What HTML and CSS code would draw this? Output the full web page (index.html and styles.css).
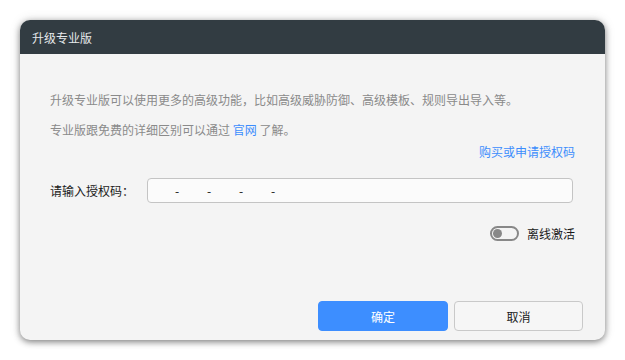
FILE: index.html
```html
<!DOCTYPE html>
<html lang="zh">
<head>
<meta charset="utf-8">
<link rel="stylesheet" href="styles.css">
</head>
<body>
<div class="dialog">
  <div class="header">升级专业版</div>
  <div class="content">
    <p class="desc">升级专业版可以使用更多的高级功能，比如高级威胁防御、高级模板、规则导出导入等。</p>
    <p class="desc second">专业版跟免费的详细区别可以通过 <a class="link">官网</a> 了解。</p>
    <div class="buy"><a class="link">购买或申请授权码</a></div>
    <div class="row">
      <span class="label">请输入授权码：</span>
      <div class="input"><span>-</span><span>-</span><span>-</span><span>-</span></div>
    </div>
    <div class="toggle-row">
      <span class="toggle"><span class="knob"></span></span>
      <span class="toggle-label">离线激活</span>
    </div>
  </div>
  <div class="footer">
    <button class="btn primary">确定</button>
    <button class="btn">取消</button>
  </div>
</div>
</body>
</html>
```
FILE: styles.css
```css
* { box-sizing: border-box; }
html, body { margin: 0; padding: 0; background: #ffffff; }
body {
  padding: 20px;
  font-family: "Noto Sans CJK SC", "Noto Sans", sans-serif;
  font-size: 12px;
}
.dialog {
  width: 585px;
  height: 320px;
  background: #f4f4f4;
  border-radius: 10px;
  overflow: hidden;
  box-shadow: 0 2px 6px rgba(0,0,0,0.45), 0 0 12px rgba(0,0,0,0.12);
  display: flex;
  flex-direction: column;
}
.header {
  height: 34px;
  background: #323c42;
  color: #e6e9eb;
  padding-left: 12px;
  display: flex;
  align-items: center;
  flex-shrink: 0;
}
.content {
  flex: 1;
  padding: 36px 30px 0 30px;
}
.desc {
  margin: 0;
  line-height: 20px;
  color: #8a8a8a;
}
.desc.second { margin-top: 10px; }
.link { color: #3c8dfd; text-decoration: none; }
.buy {
  margin-top: 2px;
  line-height: 20px;
  text-align: right;
}
.row {
  margin-top: 16px;
  display: flex;
  align-items: center;
  padding-right: 2px;
}
.label {
  width: 97px;
  color: #1a1a1a;
}
.input {
  flex: 1;
  height: 25px;
  background: #fbfbfb;
  border: 1px solid #c4c4c4;
  border-radius: 4px;
  display: flex;
  align-items: center;
  padding-left: 27px;
  color: #111;
}
.input span { width: 32px; }
.toggle-row {
  margin-top: 23px;
  display: flex;
  justify-content: flex-end;
  align-items: center;
  gap: 8px;
  height: 15px;
}
.toggle {
  width: 29px;
  height: 15px;
  border: 2px solid #888;
  border-radius: 8px;
  display: flex;
  align-items: center;
  padding-left: 1px;
}
.knob {
  width: 9px;
  height: 9px;
  border-radius: 50%;
  background: #888;
}
.toggle-label { color: #1a1a1a; line-height: 15px; }
.footer {
  display: flex;
  justify-content: flex-end;
  gap: 6px;
  padding: 0 22px 9px 0;
}
.btn {
  width: 129px;
  height: 30px;
  border: 1px solid #c9c9c9;
  border-radius: 4px;
  background: #f6f6f6;
  color: #1a1a1a;
  font-family: inherit;
  font-size: 12px;
}
.btn.primary {
  width: 130px;
  background: #3d8eff;
  border-color: #3d8eff;
  color: #ffffff;
}
```
